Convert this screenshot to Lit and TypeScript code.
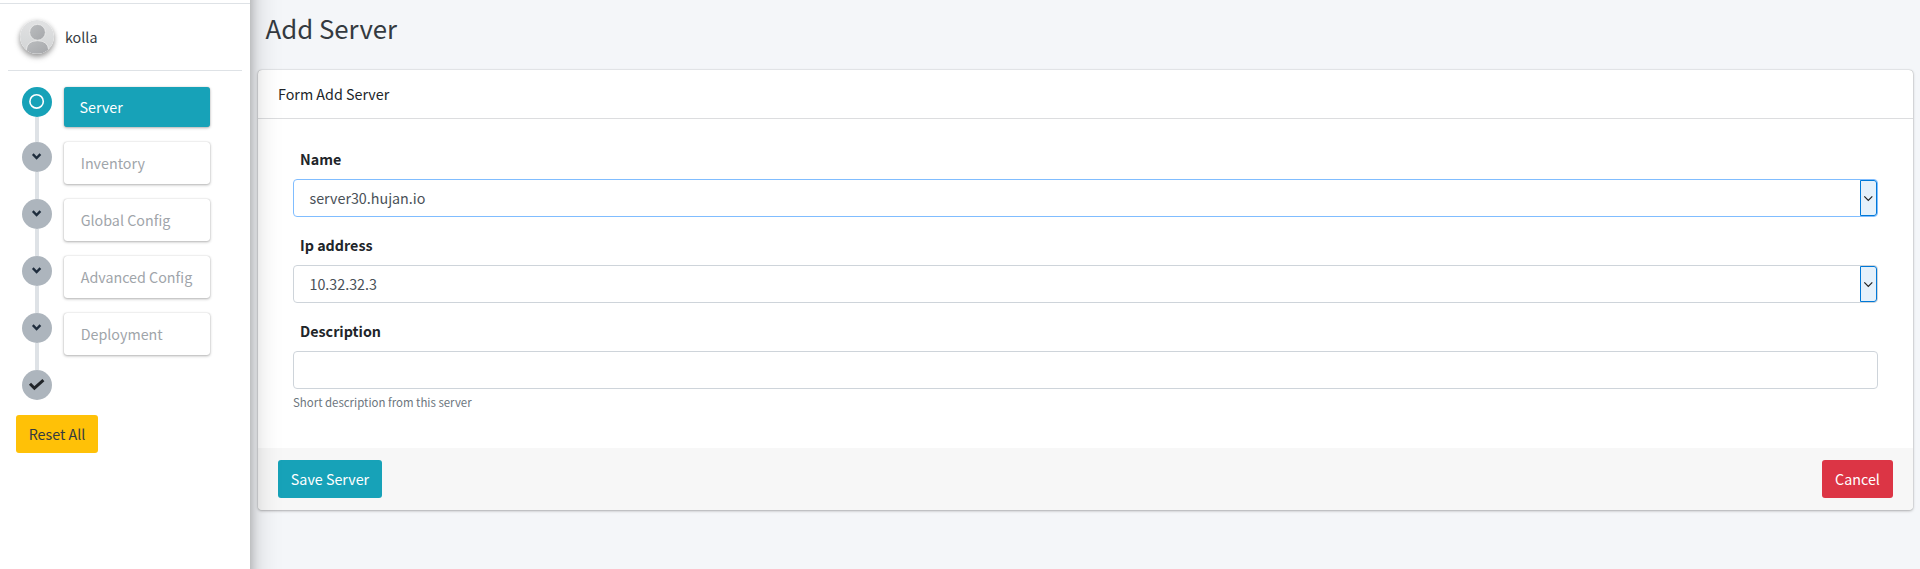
import { LitElement, html, css, svg } from "lit";
import { customElement, property } from "lit/decorators.js";

const chevron = svg`<path d="M-4.2 -2.8 L-.4 1 L3.4 -2.8" fill="none" stroke="#1f2d3d" stroke-width="2.4"/>`;
const ring = svg`<circle cx="-.4" cy="-.6" r="6.7" fill="none" stroke="#fff" stroke-width="1.6"/>`;
const check = svg`<path d="M-7 -1.2 L-2.6 3.2 L6.4 -4.8" fill="none" stroke="#212529" stroke-width="3"/>`;

@customElement("step-item")
class StepItem extends LitElement {
  @property() label = "";
  @property({ type: Boolean }) active = false;
  @property({ type: Boolean }) last = false;

  static styles = css`
    :host { display: flex; align-items: flex-start; margin-bottom: 15px; }
    .dot { width: 30px; height: 30px; border-radius: 50%; background: #adb5bd; flex: none; position: relative; }
    .dot.active { background: #17a2b8; }
    .line { position: absolute; left: 13px; top: 30px; width: 4px; height: 27px; background: #dee2e6; }
    .line.active { height: 25px; }
    svg { display: block; width: 30px; height: 30px; }
    .box {
      margin-left: 12px; width: 146px; height: 42px; box-sizing: border-box; border-radius: 3px;
      background: #fff; color: #9fa5aa; line-height: 41px; padding-left: 16.7px; white-space: nowrap;
      box-shadow: 0 0 1px rgba(0,0,0,.25), 0 1px 3px rgba(0,0,0,.3);
    }
    .box.active { height: 40px; line-height: 40px; background: #17a2b8; color: #fff; padding-left: 15.5px; }
  `;

  render() {
    const state = this.active ? "active" : "";
    const icon = this.active ? ring : this.last ? check : chevron;
    return html`
      <div class="dot ${state}">
        <svg viewBox="-15 -15 30 30">${icon}</svg>
        ${this.last ? "" : html`<div class="line ${state}"></div>`}
      </div>
      ${this.last ? "" : html`<div class="box ${state}">${this.label}</div>`}
    `;
  }
}

@customElement("app-root")
class AppRoot extends LitElement {
  static styles = css`
    :host {
      display: flex; width: 100%; height: 569px; overflow: hidden; background: #f4f6f9; color: #212529;
      font: 14.3px/24px "Noto Sans CJK SC", "Open Sans", sans-serif;
    }
    * { box-sizing: border-box; }
    .sidebar {
      width: 250px; flex: none; background: #fff; margin: -60px 0; padding-top: 63px; position: relative; z-index: 2;
      box-shadow: 0 14px 28px rgba(0,0,0,.25), 0 10px 10px rgba(0,0,0,.22);
    }
    .user {
      border-top: 1px solid #dee2e6; height: 67px; display: flex; align-items: center; padding: 0 0 1px 20px;
      gap: 11px; color: #343a40;
    }
    .avatar { width: 34px; height: 34px; border-radius: 50%; box-shadow: 0 3px 6px rgba(0,0,0,.26), 0 2px 5px rgba(0,0,0,.23); }
    .rule { height: 1px; margin: 0 8px 16px; background: #dee2e6; }
    .steps { padding-left: 22px; }
    .btn { height: 38px; border-radius: 3px; display: flex; align-items: center; justify-content: center; color: #fff; }
    .reset { width: 82px; margin-left: 16px; background: #ffc107; color: #343a40; }
    .save { width: 104px; background: #17a2b8; }
    .cancel { width: 71px; background: #dc3545; }
    main { flex: 1; padding: 0 7px 0 8px; }
    h1 { margin: 0; height: 70px; padding: 8px 0 0 7.5px; font-size: 25.8px; line-height: 40px; font-weight: 400; color: #343a40; }
    .card { height: 440px; border-radius: 4px; background: #fff; display: flex; flex-direction: column; overflow: hidden;
      box-shadow: 0 0 1px rgba(0,0,0,.4), 0 1px 3px rgba(0,0,0,.28); }
    .head { height: 49px; padding: 12px 20px; border-bottom: 1px solid #dcdddf; }
    .body { flex: 1; padding: 29px 35px 0; }
    label { display: block; font-weight: 700; height: 31px; line-height: 22px; padding-left: 7px; }
    .input { height: 38px; border: 1px solid #ced4da; border-radius: 4px; display: flex; color: #495057;
      align-items: center; padding-left: 15.5px; margin-bottom: 17px; }
    .input.focus { border-color: #80bdff; }
    .input span { flex: 1; }
    .drop { width: 17px; height: 36px; border: 1px solid #0078d7; border-radius: 0 3px 3px 0; background: #e5f1fb; }
    .drop svg { display: block; width: 15px; height: 34px; }
    .input.plain { margin-bottom: 3px; }
    .help { font-size: 11.45px; line-height: 21px; color: #6c757d; }
    .foot { height: 62px; padding: 12px 20px; background: #f7f7f7; display: flex; justify-content: space-between; }
  `;

  field(label: string, value: string, focus: boolean) {
    return html`
      <label>${label}</label>
      <div class="input ${focus ? "focus" : ""}">
        <span>${value}</span>
        <div class="drop">
          <svg viewBox="0 0 15 34"><path d="M3.3 15.3 L7.3 19.3 L11.3 15.3" fill="none" stroke="#222" stroke-width="1.2"/></svg>
        </div>
      </div>
    `;
  }

  render() {
    return html`
      <aside class="sidebar">
        <div class="user">
          <svg class="avatar" viewBox="0 0 34 34">
            <defs>
              <linearGradient id="bg" x2="0" y2="1"><stop stop-color="#e1e2e3"/><stop offset="1" stop-color="#d2d4d5"/></linearGradient>
              <linearGradient id="fg" x2="1" y2="1"><stop stop-color="#bbbdbf"/><stop offset="1" stop-color="#a5a7aa"/></linearGradient>
              <clipPath id="round"><circle cx="17" cy="17" r="17"/></clipPath>
            </defs>
            <g clip-path="url(#round)">
              <rect width="34" height="34" fill="url(#bg)"/>
              <circle cx="17.5" cy="12.3" r="7.9" fill="url(#fg)" stroke="#eee" stroke-width=".8"/>
              <path d="M6.3 34 V30 Q7 20.7 17.5 20.7 T28.7 30 V34Z" fill="url(#fg)" stroke="#eee" stroke-width=".8"/>
            </g>
          </svg>
          <span>kolla</span>
        </div>
        <div class="rule"></div>
        <div class="steps">
          <step-item label="Server" active></step-item>
          <step-item label="Inventory"></step-item>
          <step-item label="Global Config"></step-item>
          <step-item label="Advanced Config"></step-item>
          <step-item label="Deployment"></step-item>
          <step-item last></step-item>
        </div>
        <div class="btn reset">Reset All</div>
      </aside>
      <main>
        <h1>Add Server</h1>
        <section class="card">
          <div class="head">Form Add Server</div>
          <div class="body">
            ${this.field("Name", "server30.hujan.io", true)}
            ${this.field("Ip address", "10.32.32.3", false)}
            <label>Description</label>
            <div class="input plain"></div>
            <div class="help">Short description from this server</div>
          </div>
          <div class="foot">
            <div class="btn save">Save Server</div>
            <div class="btn cancel">Cancel</div>
          </div>
        </section>
      </main>
    `;
  }
}
